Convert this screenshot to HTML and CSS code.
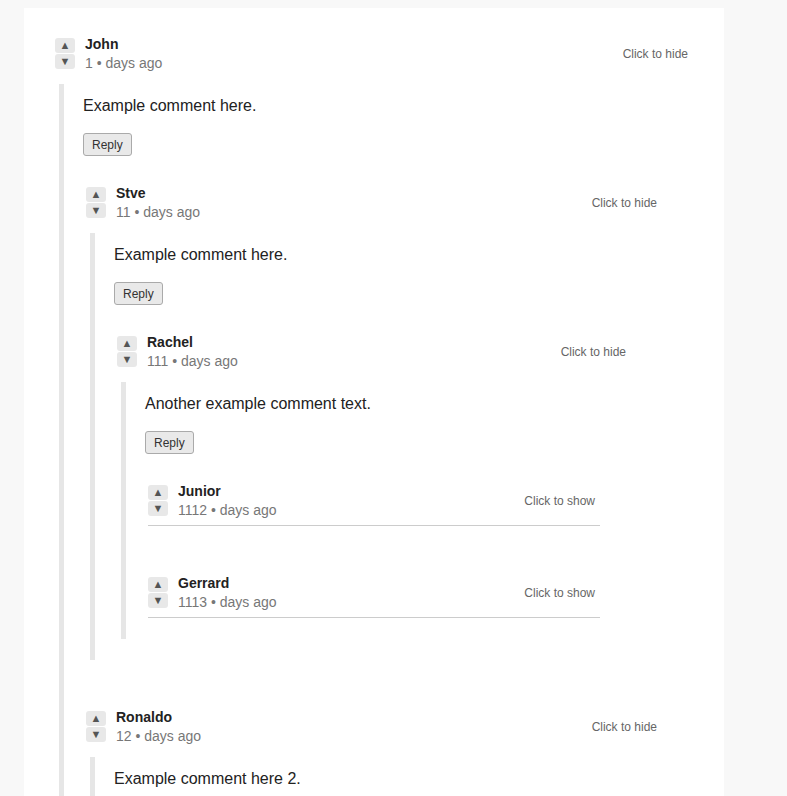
FILE: index.html
```html
<!DOCTYPE html>
<html lang="en">
<head>
<meta charset="utf-8">
<title>Comments</title>
<link rel="stylesheet" href="styles.css">
</head>
<body>
<div class="page">
  <div class="comment">
    <div class="comment-header">
      <div class="votes"><span class="vote up">▲</span><span class="vote down">▼</span></div>
      <div class="info">
        <div class="author">John</div>
        <div class="meta">1 • days ago</div>
      </div>
      <a class="toggle">Click to hide</a>
    </div>
    <div class="comment-body">
      <p class="text">Example comment here.</p>
      <button class="reply">Reply</button>
      <div class="children">
        <div class="comment">
          <div class="comment-header">
            <div class="votes"><span class="vote up">▲</span><span class="vote down">▼</span></div>
            <div class="info">
              <div class="author">Stve</div>
              <div class="meta">11 • days ago</div>
            </div>
            <a class="toggle">Click to hide</a>
          </div>
          <div class="comment-body">
            <p class="text">Example comment here.</p>
            <button class="reply">Reply</button>
            <div class="children">
              <div class="comment">
                <div class="comment-header">
                  <div class="votes"><span class="vote up">▲</span><span class="vote down">▼</span></div>
                  <div class="info">
                    <div class="author">Rachel</div>
                    <div class="meta">111 • days ago</div>
                  </div>
                  <a class="toggle">Click to hide</a>
                </div>
                <div class="comment-body">
                  <p class="text">Another example comment text.</p>
                  <button class="reply">Reply</button>
                  <div class="children">
                    <div class="comment collapsed">
                      <div class="comment-header">
                        <div class="votes"><span class="vote up">▲</span><span class="vote down">▼</span></div>
                        <div class="info">
                          <div class="author">Junior</div>
                          <div class="meta">1112 • days ago</div>
                        </div>
                        <a class="toggle">Click to show</a>
                      </div>
                    </div>
                    <div class="comment collapsed">
                      <div class="comment-header">
                        <div class="votes"><span class="vote up">▲</span><span class="vote down">▼</span></div>
                        <div class="info">
                          <div class="author">Gerrard</div>
                          <div class="meta">1113 • days ago</div>
                        </div>
                        <a class="toggle">Click to show</a>
                      </div>
                    </div>
                  </div>
                </div>
              </div>
            </div>
          </div>
        </div>
        <div class="comment">
          <div class="comment-header">
            <div class="votes"><span class="vote up">▲</span><span class="vote down">▼</span></div>
            <div class="info">
              <div class="author">Ronaldo</div>
              <div class="meta">12 • days ago</div>
            </div>
            <a class="toggle">Click to hide</a>
          </div>
          <div class="comment-body">
            <p class="text">Example comment here 2.</p>
            <button class="reply">Reply</button>
          </div>
        </div>
      </div>
    </div>
  </div>
</div>
</body>
</html>
```
FILE: styles.css
```css
html, body {
  margin: 0;
  padding: 0;
  background: #f8f8f8;
  font-family: "Liberation Sans", Arial, sans-serif;
  color: #222;
}

.page {
  margin: 8px 0 0 24px;
  width: 700px;
  box-sizing: border-box;
  background: #fff;
  padding: 27px 31px 60px 31px;
  min-height: 900px;
}

.comment-header {
  display: flex;
  align-items: flex-start;
}

.votes {
  display: flex;
  flex-direction: column;
  gap: 1px;
  width: 20px;
  margin-top: 3px;
  margin-right: 10px;
}

.vote {
  display: flex;
  align-items: center;
  justify-content: center;
  height: 15px;
  background: #e8e8e8;
  border-radius: 3px;
  color: #555;
  font-size: 11px;
  line-height: 1;
}

.info {
  flex: 1;
}

.author {
  font-weight: bold;
  font-size: 14px;
  line-height: 19px;
  color: #222;
}

.meta {
  font-size: 14px;
  line-height: 19px;
  color: #777;
}

.toggle {
  align-self: center;
  font-size: 12px;
  color: #666;
  padding-right: 5px;
  cursor: pointer;
}

.comment-body {
  margin-top: 11px;
  margin-left: 4px;
  border-left: 5px solid #e6e6e6;
  padding: 12px 31px 21px 19px;
}

.text {
  margin: 0;
  font-size: 16px;
  line-height: 20px;
  color: #222;
}

.reply {
  display: block;
  margin-top: 17px;
  height: 23px;
  padding: 0 8px;
  font-family: "Liberation Sans", Arial, sans-serif;
  font-size: 12px;
  color: #333;
  background: #e9e9e9;
  border: 1px solid #aaa;
  border-radius: 3px;
}

.children {
  margin-top: 28px;
  margin-left: 3px;
  display: flex;
  flex-direction: column;
  gap: 48px;
}

.collapsed {
  padding-bottom: 5px;
  border-bottom: 1px solid #ccc;
}
```
